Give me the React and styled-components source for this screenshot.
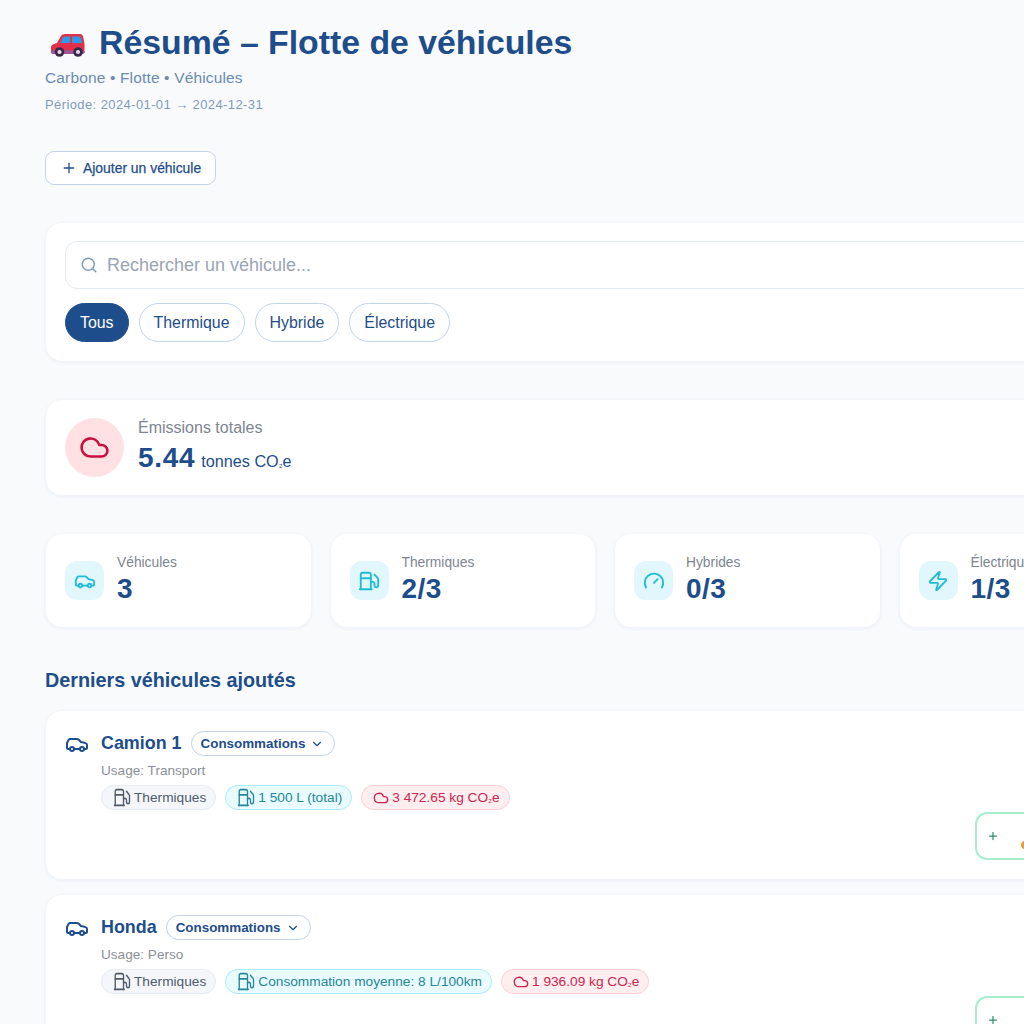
import React from "react";
import styled, { createGlobalStyle } from "styled-components";
import { Car, ChevronDown, Cloud, Fuel, Gauge, Plus, Search, Zap } from "lucide-react";

const Global = createGlobalStyle`
  html, body { margin: 0; padding: 0; background: #f8fafc; overflow: hidden; }
  * { box-sizing: border-box; }
  body { font-family: "Liberation Sans", Arial, sans-serif; }
`;

const navy = "#1e4d8b";

const Page = styled.div`
  width: 1210px;
  height: 1024px;
  overflow: hidden;
  padding: 20px 46px 0 45px;
  display: flex;
  flex-direction: column;
  & > * { flex-shrink: 0; }
`;
const Title = styled.h1`
  margin: 0;
  height: 44px;
  display: flex;
  align-items: center;
  gap: 13px;
  padding-left: 4px;
  font-size: 33.8px;
  line-height: 44px;
  font-weight: 700;
  color: ${navy};
`;
const Subtitle = styled.div`
  margin-top: 4px;
  font-size: 15.5px;
  letter-spacing: 0.15px;
  line-height: 20px;
  color: #6b8bb0;
`;
const Period = styled.div`
  margin-top: 9px;
  font-size: 13px;
  letter-spacing: 0.4px;
  line-height: 16px;
  color: #7f9cbd;
`;
const AddButton = styled.button`
  align-self: flex-start;
  margin-top: 38px;
  width: 171px;
  height: 34px;
  display: flex;
  align-items: center;
  gap: 6px;
  padding: 0 0 1px 15px;
  background: #fff;
  border: 1px solid #c3d3e6;
  border-radius: 9px;
  color: ${navy};
  font: 500 13.9px "Liberation Sans", sans-serif;
  -webkit-text-stroke: 0.25px ${navy};
`;
const Panel = styled.section`
  margin-left: 1px;
  background: #fff;
  border-radius: 16px;
  box-shadow: 0 1px 4px rgba(30, 60, 110, 0.07);
`;
const SearchPanel = styled(Panel)`
  margin-top: 38px;
  padding: 18px 19px 19px;
  display: flex;
  flex-direction: column;
  gap: 14px;
`;
const SearchBox = styled.div`
  height: 48px;
  display: flex;
  align-items: center;
  gap: 9px;
  padding: 0 14px;
  border: 1px solid #e4eaf1;
  border-radius: 12px;
  color: #7f9cbd;
  font-size: 18px;
`;
const Placeholder = styled.span`
  color: #9aa5b4;
`;
const Pills = styled.div`
  display: flex;
  gap: 10px;
`;
const Pill = styled.button`
  height: 39px;
  padding: 0 14px;
  border-radius: 20px;
  border: 1px solid ${(p) => (p.$active ? navy : "#c3d3e6")};
  background: ${(p) => (p.$active ? navy : "#fff")};
  color: ${(p) => (p.$active ? "#fff" : navy)};
  font: 500 15.9px "Liberation Sans", sans-serif;
`;
const EmissionPanel = styled(Panel)`
  margin-top: 39px;
  height: 95px;
  padding: 0 19px;
  display: flex;
  align-items: center;
  gap: 14px;
`;
const EmissionIcon = styled.div`
  width: 59px;
  height: 59px;
  border-radius: 50%;
  background: #ffe1e4;
  color: #c8103e;
  display: flex;
  align-items: center;
  justify-content: center;
`;
const EmissionText = styled.div`
  padding-top: 2px;
`;
const EmissionLabel = styled.div`
  font-size: 16px;
  line-height: 18px;
  color: #7d8590;
`;
const EmissionValue = styled.div`
  margin-top: 6px;
  font-size: 16.2px;
  line-height: 30px;
  color: ${navy};
`;
const BigNumber = styled.strong`
  font-size: 28px;
  letter-spacing: 0.7px;
  margin-right: 6px;
`;
const Sub = styled.span`
  font-size: 10px;
`;
const Stats = styled.div`
  margin: 39px 0 0 1px;
  display: grid;
  grid-template-columns: repeat(4, 1fr);
  gap: 20px;
`;
const StatCard = styled(Panel)`
  margin: 0;
  height: 93px;
  padding: 0 19px;
  display: flex;
  align-items: center;
  gap: 13px;
`;
const StatIcon = styled.div`
  width: 39px;
  height: 39px;
  border-radius: 12px;
  background: #e2f7fb;
  color: #1fbcd6;
  display: flex;
  align-items: center;
  justify-content: center;
`;
const StatText = styled.div`
  padding-bottom: 2px;
`;
const StatLabel = styled.div`
  font-size: 13.8px;
  line-height: 16px;
  color: #7d8590;
`;
const StatValue = styled.div`
  margin-top: 3px;
  font-size: 28px;
  letter-spacing: 0.5px;
  line-height: 30px;
  font-weight: 700;
  color: ${navy};
`;
const Heading = styled.h2`
  margin: 41px 0 0;
  font-size: 19.8px;
  line-height: 24px;
  font-weight: 700;
  color: ${navy};
`;
const Vehicles = styled.div`
  margin: 19px 0 0 1px;
  display: flex;
  flex-direction: column;
  gap: 16px;
`;
const VehicleCard = styled(Panel)`
  margin: 0;
  height: 168px;
  padding: 20px 19px;
  display: flex;
  flex-direction: column;
`;
const VehicleHead = styled.div`
  display: flex;
  align-items: center;
  height: 25px;
  color: ${navy};
`;
const VehicleName = styled.span`
  margin: 0 9px 0 12px;
  font-size: 17.9px;
  font-weight: 600;
`;
const Dropdown = styled.button`
  height: 25px;
  display: flex;
  align-items: center;
  gap: 5px;
  padding: 0 10px 0 9px;
  background: #fff;
  border: 1px solid #c3d3e6;
  border-radius: 13px;
  color: ${navy};
  font: 700 13.4px "Liberation Sans", sans-serif;
`;
const Usage = styled.div`
  margin: 7px 0 0 36px;
  font-size: 13.6px;
  line-height: 16px;
  color: #8a9099;
`;
const Chips = styled.div`
  margin: 6px 0 0 36px;
  display: flex;
  gap: 9px;
`;
const tones = {
  gray: ["#f4f6fa", "#e6ebf2", "#4f5b6b"],
  cyan: ["#e8fbfe", "#a9ecf7", "#26869c"],
  red: ["#ffeef0", "#fdd0d6", "#c8264f"],
};
const Chip = styled.span`
  height: 25px;
  display: flex;
  align-items: center;
  gap: 3px;
  padding: 0 9px 0 11px;
  border-radius: 13px;
  font-size: 13.7px;
  background: ${(p) => tones[p.$tone][0]};
  border: 1px solid ${(p) => tones[p.$tone][1]};
  color: ${(p) => tones[p.$tone][2]};
`;
const Actions = styled.div`
  margin-top: 2px;
  display: flex;
  justify-content: flex-end;
`;
const GreenButton = styled.button`
  position: relative;
  width: 170px;
  height: 48px;
  display: flex;
  align-items: center;
  padding: 0 0 0 10px;
  background: #fff;
  border: 2px solid #a5efcf;
  border-radius: 12px;
  color: #2f8f6b;
`;
const GreenDot = styled.span`
  position: absolute;
  left: 44px;
  top: 27px;
  width: 8px;
  height: 8px;
  border-radius: 50%;
  background: #d9a441;
`;

const CarEmoji = () => (
  <svg width="37" height="30" viewBox="0 0 37 30" aria-hidden="true">
    <path d="M2 24 V20 Q2 18 5 17 L8 16 L12 9 Q13 7 16 7 H31 Q33 7 34 9 L35.500 17 V25 Q35.500 26 34 26 H3 Q2 26 2 24Z" fill="#e2304a" />
    <path d="M11 16 L14.500 10 Q15 9.500 16.500 9.500 H21 V16Z" fill="#2f9be8" />
    <path d="M23 9.500 H30.500 Q31.500 9.500 32 11 L33 16 H23Z" fill="#2f9be8" />
    <rect x="2" y="23.500" width="33.500" height="3.500" rx="1.700" fill="#a0559f" />
    <circle cx="10.500" cy="25" r="4.800" fill="#3a2a4a" />
    <circle cx="10.500" cy="25" r="2.100" fill="#e8dbe8" />
    <circle cx="29" cy="25" r="4.800" fill="#3a2a4a" />
    <circle cx="29" cy="25" r="2.100" fill="#e8dbe8" />
  </svg>
);

const ChipFuel = () => <Fuel width={18} height={21} preserveAspectRatio="none" strokeWidth={1.8} />;

const vehicles = [
  { name: "Camion 1", usage: "Transport", fuel: "1 500 L (total)", co2: "3 472.65" },
  { name: "Honda", usage: "Perso", fuel: "Consommation moyenne: 8 L/100km", co2: "1 936.09" },
];
const stats = [
  { label: "Véhicules", value: "3", Icon: Car },
  { label: "Thermiques", value: "2/3", Icon: Fuel },
  { label: "Hybrides", value: "0/3", Icon: Gauge },
  { label: "Électriques", value: "1/3", Icon: Zap },
];

export default function App() {
  return (
    <Page>
      <Global />
      <Title>
        <CarEmoji />
        <span>Résumé – Flotte de véhicules</span>
      </Title>
      <Subtitle>Carbone • Flotte • Véhicules</Subtitle>
      <Period>Période: 2024-01-01 → 2024-12-31</Period>
      <AddButton>
        <Plus size={16} />
        Ajouter un véhicule
      </AddButton>
      <SearchPanel>
        <SearchBox>
          <Search size={18} />
          <Placeholder>Rechercher un véhicule...</Placeholder>
        </SearchBox>
        <Pills>
          <Pill $active>Tous</Pill>
          <Pill>Thermique</Pill>
          <Pill>Hybride</Pill>
          <Pill>Électrique</Pill>
        </Pills>
      </SearchPanel>
      <EmissionPanel>
        <EmissionIcon>
          <Cloud size={31} strokeWidth={2} />
        </EmissionIcon>
        <EmissionText>
          <EmissionLabel>Émissions totales</EmissionLabel>
          <EmissionValue>
            <BigNumber>5.44</BigNumber>tonnes CO<Sub>₂</Sub>e
          </EmissionValue>
        </EmissionText>
      </EmissionPanel>
      <Stats>
        {stats.map(({ label, value, Icon }) => (
          <StatCard key={label}>
            <StatIcon>
              <Icon size={22} />
            </StatIcon>
            <StatText>
              <StatLabel>{label}</StatLabel>
              <StatValue>{value}</StatValue>
            </StatText>
          </StatCard>
        ))}
      </Stats>
      <Heading>Derniers véhicules ajoutés</Heading>
      <Vehicles>
        {vehicles.map((v) => (
          <VehicleCard key={v.name}>
            <VehicleHead>
              <Car size={24} />
              <VehicleName>{v.name}</VehicleName>
              <Dropdown>
                Consommations
                <ChevronDown size={14} />
              </Dropdown>
            </VehicleHead>
            <Usage>Usage: {v.usage}</Usage>
            <Chips>
              <Chip $tone="gray">
                <ChipFuel />
                <span>Thermiques</span>
              </Chip>
              <Chip $tone="cyan">
                <ChipFuel />
                <span>{v.fuel}</span>
              </Chip>
              <Chip $tone="red">
                <Cloud size={16} />
                <span>
                  {v.co2} kg CO<Sub>₂</Sub>e
                </span>
              </Chip>
            </Chips>
            <Actions>
              <GreenButton>
                <Plus size={12} strokeWidth={2.5} />
                <GreenDot />
              </GreenButton>
            </Actions>
          </VehicleCard>
        ))}
      </Vehicles>
    </Page>
  );
}
